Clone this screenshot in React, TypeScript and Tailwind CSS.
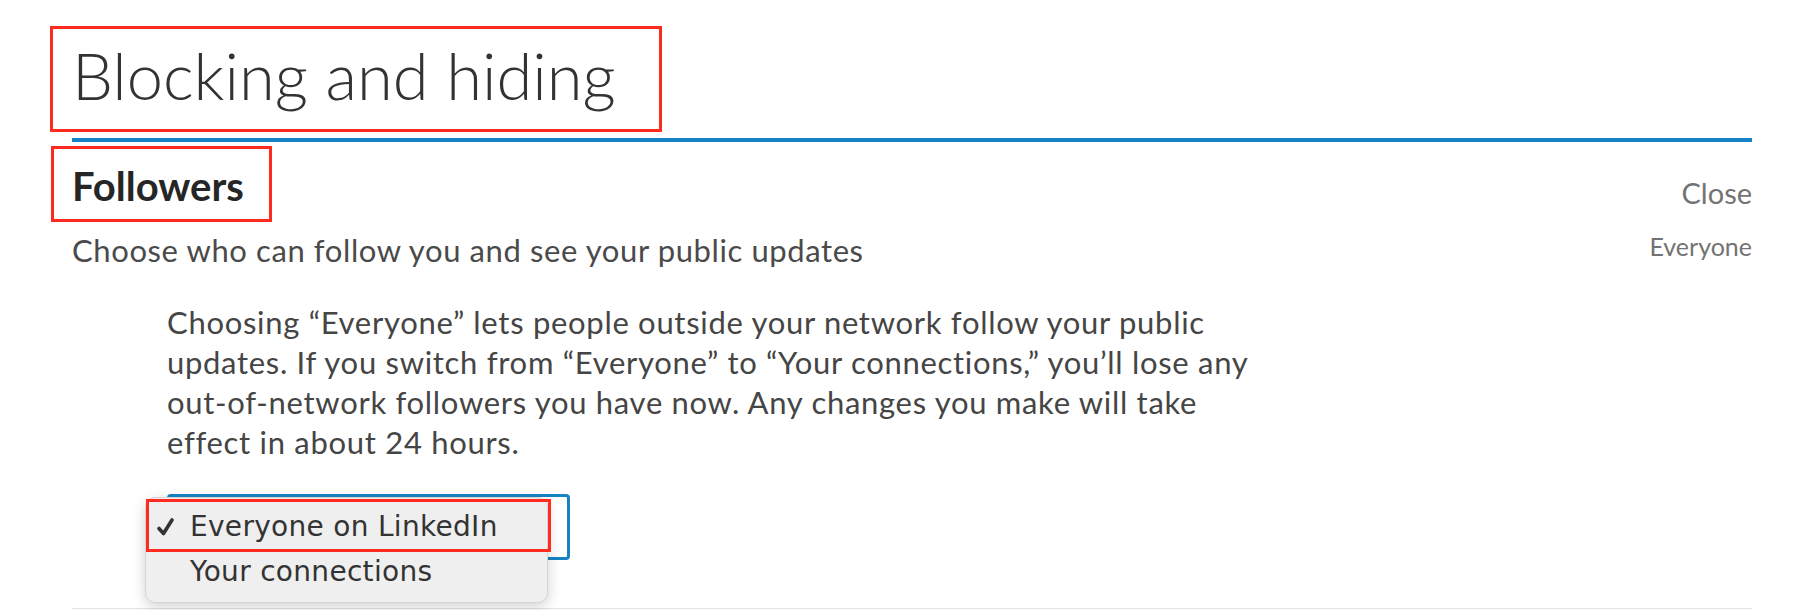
import React from "react";

// Réglages de la section « Blocking and hiding » avec le menu déroulant ouvert
export default function App() {
  return (
    <div className="min-h-[610px] w-[1804px] overflow-hidden bg-white font-['Lato',sans-serif]">
      <div className="ml-[72px] w-[1680px]">
        {/* Titre de la page */}
        <h1 className="relative pt-[39px] text-[65px] font-light leading-[72px] text-[#333333]">
          <span className="absolute left-[-22px] top-[26px] h-[106px] w-[612px] border-[3px] border-[#ff2b1f]" />
          Blocking and hiding
        </h1>
        <div className="mt-[27px] h-[4px] bg-[#1682c4]" />

        {/* En-tête de la section */}
        <div className="mt-[20px] flex items-start justify-between">
          <h2 className="relative text-[40px] font-bold leading-[48px] text-[#262626]">
            <span className="absolute left-[-21px] top-[-16px] h-[76px] w-[221px] border-[3px] border-[#ff2b1f]" />
            Followers
          </h2>
          <button className="mt-[13px] text-[29px] leading-[36px] text-[#737373]">Close</button>
        </div>

        <div className="mt-[19px] flex items-start justify-between">
          <p className="text-[31px] leading-[40px] tracking-[0.6px] text-[#4a4a4a]">
            Choose who can follow you and see your public updates
          </p>
          <span className="text-[25px] leading-[32px] text-[#737373]">Everyone</span>
        </div>

        {/* Explication */}
        <p className="ml-[95px] mt-[32px] text-[31px] leading-[40px] tracking-[0.7px] text-[#454545]">
          Choosing “Everyone” lets people outside your network follow your public
          <br />
          updates. If you switch from “Everyone” to “Your connections,” you’ll lose any
          <br />
          out-of-network followers you have now. Any changes you make will take
          <br />
          effect in about 24 hours.
        </p>

        {/* Liste déroulante ouverte */}
        <div className="relative ml-[95px] mt-[32px] h-[66px] w-[403px] rounded-[4px] border-[3px] border-[#1682c4]">
          <div className="absolute left-[-25px] top-[0px] w-[403px] rounded-[10px] border border-[#d4d4d4] bg-[#efefef] pb-[8px] pt-[6px] font-['DejaVu_Sans',sans-serif] text-[28px] leading-[45px] tracking-[0.3px] text-[#333333] shadow-[0_4px_14px_rgba(0,0,0,0.18)]">
            <span className="absolute left-[0px] top-[1px] h-[53px] w-[405px] border-[3px] border-[#ff2b1f]" />
            <div className="flex items-center">
              <span className="flex w-[44px] justify-end pr-[16px]">
                <svg width="17" height="18" viewBox="0 0 17 18" fill="none">
                  <path d="M2 10.5 L6.5 15.5 L15 2" stroke="#333333" strokeWidth="3.6" strokeLinecap="round" strokeLinejoin="round" />
                </svg>
              </span>
              <span>Everyone on LinkedIn</span>
            </div>
            <div className="flex items-center">
              <span className="w-[44px]" />
              <span>Your connections</span>
            </div>
          </div>
        </div>

        <div className="mt-[48px] h-px bg-[#e3e3e3]" />
      </div>
    </div>
  );
}
